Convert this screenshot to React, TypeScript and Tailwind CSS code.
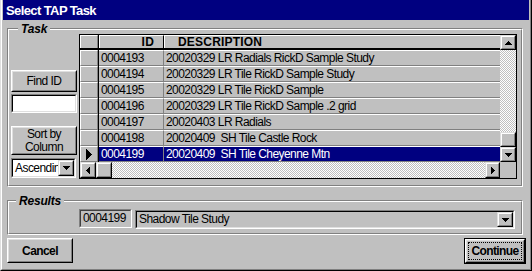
import React from "react";

type P = { className?: string; inner?: string; children?: React.ReactNode };

function Raised({ className = "", inner = "", children }: P) {
  return (
    <div className={`border border-t-white border-l-white border-r-black border-b-black bg-[#c0c0c0] ${className}`}>
      <div className={`w-full h-full border border-t-[#dfdfdf] border-l-[#dfdfdf] border-r-[#808080] border-b-[#808080] ${inner}`}>
        {children}
      </div>
    </div>
  );
}

function ScrollBtn({ className = "", inner = "", children }: P) {
  return (
    <div className={`border border-t-[#dfdfdf] border-l-[#dfdfdf] border-r-black border-b-black bg-[#c0c0c0] ${className}`}>
      <div className={`w-full h-full border border-t-white border-l-white border-r-[#808080] border-b-[#808080] flex items-center justify-center ${inner}`}>
        {children}
      </div>
    </div>
  );
}

function Sunken({ className = "", inner = "", children }: P) {
  return (
    <div className={`border border-t-[#808080] border-l-[#808080] border-r-white border-b-white ${className}`}>
      <div className={`w-full h-full border border-t-black border-l-black border-r-[#dfdfdf] border-b-[#dfdfdf] ${inner}`}>
        {children}
      </div>
    </div>
  );
}

function Group({ label, className = "", labelClass = "", children }: P & { label: string; labelClass?: string }) {
  return (
    <div className={`relative border border-t-[#808080] border-l-[#808080] border-r-white border-b-white ${className}`}>
      <div className="w-full h-full border border-t-white border-l-white border-r-[#808080] border-b-[#808080]">
        {children}
      </div>
      <span className={`absolute top-[-6px] bg-[#c0c0c0] px-[3px] text-[12px] leading-[12px] font-bold italic tracking-[-0.2px] ${labelClass}`}>
        {label}
      </span>
    </div>
  );
}

const Down = () => (
  <svg width="7" height="4" shapeRendering="crispEdges">
    <rect x="0" y="0" width="7" height="1" />
    <rect x="1" y="1" width="5" height="1" />
    <rect x="2" y="2" width="3" height="1" />
    <rect x="3" y="3" width="1" height="1" />
  </svg>
);
const Up = () => (
  <svg width="7" height="4" shapeRendering="crispEdges">
    <rect x="3" y="0" width="1" height="1" />
    <rect x="2" y="1" width="3" height="1" />
    <rect x="1" y="2" width="5" height="1" />
    <rect x="0" y="3" width="7" height="1" />
  </svg>
);
const Left = () => (
  <svg width="4" height="7" shapeRendering="crispEdges">
    <rect x="0" y="3" width="1" height="1" />
    <rect x="1" y="2" width="1" height="3" />
    <rect x="2" y="1" width="1" height="5" />
    <rect x="3" y="0" width="1" height="7" />
  </svg>
);
const Right = () => (
  <svg width="4" height="7" shapeRendering="crispEdges">
    <rect x="0" y="0" width="1" height="7" />
    <rect x="1" y="1" width="1" height="5" />
    <rect x="2" y="2" width="1" height="3" />
    <rect x="3" y="3" width="1" height="1" />
  </svg>
);
const Pointer = () => (
  <svg width="6" height="11" shapeRendering="crispEdges">
    <rect x="0" y="0" width="1" height="11" />
    <rect x="1" y="1" width="1" height="9" />
    <rect x="2" y="2" width="1" height="7" />
    <rect x="3" y="3" width="1" height="5" />
    <rect x="4" y="4" width="1" height="3" />
    <rect x="5" y="5" width="1" height="1" />
  </svg>
);

const rows: [string, string][] = [
  ["0004193", "20020329 LR Radials RickD Sample Study"],
  ["0004194", "20020329 LR Tile RickD Sample Study"],
  ["0004195", "20020329 LR Tile RickD Sample"],
  ["0004196", "20020329 LR Tile RickD Sample .2 grid"],
  ["0004197", "20020403 LR Radials"],
  ["0004198", "20020409  SH Tile Castle Rock"],
  ["0004199", "20020409  SH Tile Cheyenne Mtn"],
];

const dither = "bg-[repeating-conic-gradient(#ffffff_0_25%,#c0c0c0_0_50%)] bg-[length:2px_2px]";

function Grid() {
  return (
    <div className="w-[438px] h-[145px] border border-black bg-[#c0c0c0] flex flex-col">
      <div className="flex h-[127px]">
        <div className="w-[420px] flex flex-col">
          <div className="flex h-[15px] border-b-2 border-black">
            <div className="w-[19px] border-r border-black">
              <div className="h-full border border-t-white border-l-white border-r-[#808080] border-b-0" />
            </div>
            <div className="w-[65px] border-t border-l border-t-white border-l-white border-r border-r-black text-right pr-[9px] font-bold text-[12px] leading-[12px] tracking-[0.2px]">
              ID
            </div>
            <div className="w-[336px] border-t border-l border-t-white border-l-white pl-[13px] font-bold text-[12px] leading-[12px] tracking-[0.2px]">
              DESCRIPTION
            </div>
          </div>
          {rows.map(([id, desc], i) => {
            const sel = i === rows.length - 1;
            const cell = `border-t border-t-white border-b border-b-[#808080] pl-[2px] leading-[14px] whitespace-pre overflow-hidden ${
              sel ? "bg-[#000080] text-white" : ""
            }`;
            return (
              <div key={id} className="flex h-[16px]">
                <div className="w-[19px] border-r border-black">
                  <div className="h-full border border-t-white border-l-white border-r-[#808080] border-b-[#808080] flex items-center justify-center">
                    {sel && <Pointer />}
                  </div>
                </div>
                <div className={`w-[65px] border-r border-r-[#808080] ${cell}`}>{id}</div>
                <div className={`w-[336px] ${cell}`}>{desc}</div>
              </div>
            );
          })}
        </div>
        <div className="w-[16px] flex flex-col">
          <ScrollBtn className="h-[15px]">
            <Up />
          </ScrollBtn>
          <div className={`flex-1 ${dither}`} />
          <ScrollBtn className="h-[15px]" />
          <ScrollBtn className="h-[15px]">
            <Down />
          </ScrollBtn>
        </div>
      </div>
      <div className="flex h-[16px]">
        <div className="w-[420px] flex">
          <ScrollBtn className="w-[16px] h-full">
            <Left />
          </ScrollBtn>
          <ScrollBtn className="w-[16px] h-full" />
          <div className={`flex-1 ${dither}`} />
          <ScrollBtn className="w-[15px] h-full">
            <Right />
          </ScrollBtn>
        </div>
        <div className="w-[16px] bg-[#c0c0c0]" />
      </div>
    </div>
  );
}

export default function App() {
  return (
    <div className="w-[532px] h-[271px] bg-[#c0c0c0] border-l border-l-[#dfdfdf] border-r border-r-black border-b border-b-black font-['Liberation_Sans',Arial,sans-serif] text-black text-[12px] tracking-[-0.55px] overflow-hidden">
      <div className="w-full h-full border-l border-l-white border-r border-r-[#808080] border-b border-b-[#808080] px-[1px] flex flex-col">
        <div className="h-[20px] bg-[#000080] text-white font-bold text-[13px] tracking-[-0.6px] leading-[18px] pt-[2px] pl-[3px]">
          Select TAP Task
        </div>
        <div className="flex flex-col pl-[4px]">
          <Group label="Task" className="mt-[8px] w-[516px] h-[159px]" labelClass="left-[10px]">
            <div className="flex pl-[2px] pt-[4px] gap-[2px]">
              <div className="w-[66px] flex flex-col">
                <Raised className="mt-[36px] h-[22px]" inner="flex items-center justify-center leading-[14px]">
                  Find ID
                </Raised>
                <Sunken className="mt-[2px] h-[19px]" inner="bg-white" />
                <Raised className="mt-[13px] h-[29px]" inner="flex flex-col items-center justify-center leading-[13px]">
                  <span>Sort by</span>
                  <span>Column</span>
                </Raised>
                <Sunken className="mt-[3px] h-[20px] w-[65px]" inner="bg-white flex">
                  <span className="flex-1 overflow-hidden whitespace-nowrap pl-[2px] leading-[16px]">Ascending</span>
                  <ScrollBtn className="w-[16px] h-full">
                    <Down />
                  </ScrollBtn>
                </Sunken>
              </div>
              <Grid />
            </div>
          </Group>
          <Group label="Results" className="mt-[13px] w-[516px] h-[35px]" labelClass="left-[8px]">
            <div className="flex items-start pt-[7px] pl-[70px]">
              <div className="w-[53px] h-[19px] border border-t-[#808080] border-l-[#808080] border-r-white border-b-white">
                <div className="h-full border border-t-[#404040] border-l-[#404040] border-r-[#c0c0c0] border-b-[#c0c0c0] pl-[2px] leading-[15px]">
                  0004199
                </div>
              </div>
              <Sunken className="ml-[3px] mt-[1px] w-[380px] h-[19px]" inner="flex bg-[#c0c0c0]">
                <span className="flex-1 pl-[2px] leading-[15px] whitespace-nowrap">Shadow Tile Study</span>
                <ScrollBtn className="w-[16px] h-full">
                  <Down />
                </ScrollBtn>
              </Sunken>
            </div>
          </Group>
          <div className="mt-[3px] flex justify-between pr-[3px]">
            <Raised className="w-[66px] h-[25px]" inner="flex items-center justify-center font-bold text-[12px] tracking-[-0.6px]">
              Cancel
            </Raised>
            <div className="w-[62px] h-[26px] border border-black">
              <Raised className="w-full h-full" inner="p-[1px]">
                <div className="h-full border border-dotted border-black flex items-center justify-center font-bold text-[12px] tracking-[-0.6px]">
                  Continue
                </div>
              </Raised>
            </div>
          </div>
        </div>
      </div>
    </div>
  );
}
